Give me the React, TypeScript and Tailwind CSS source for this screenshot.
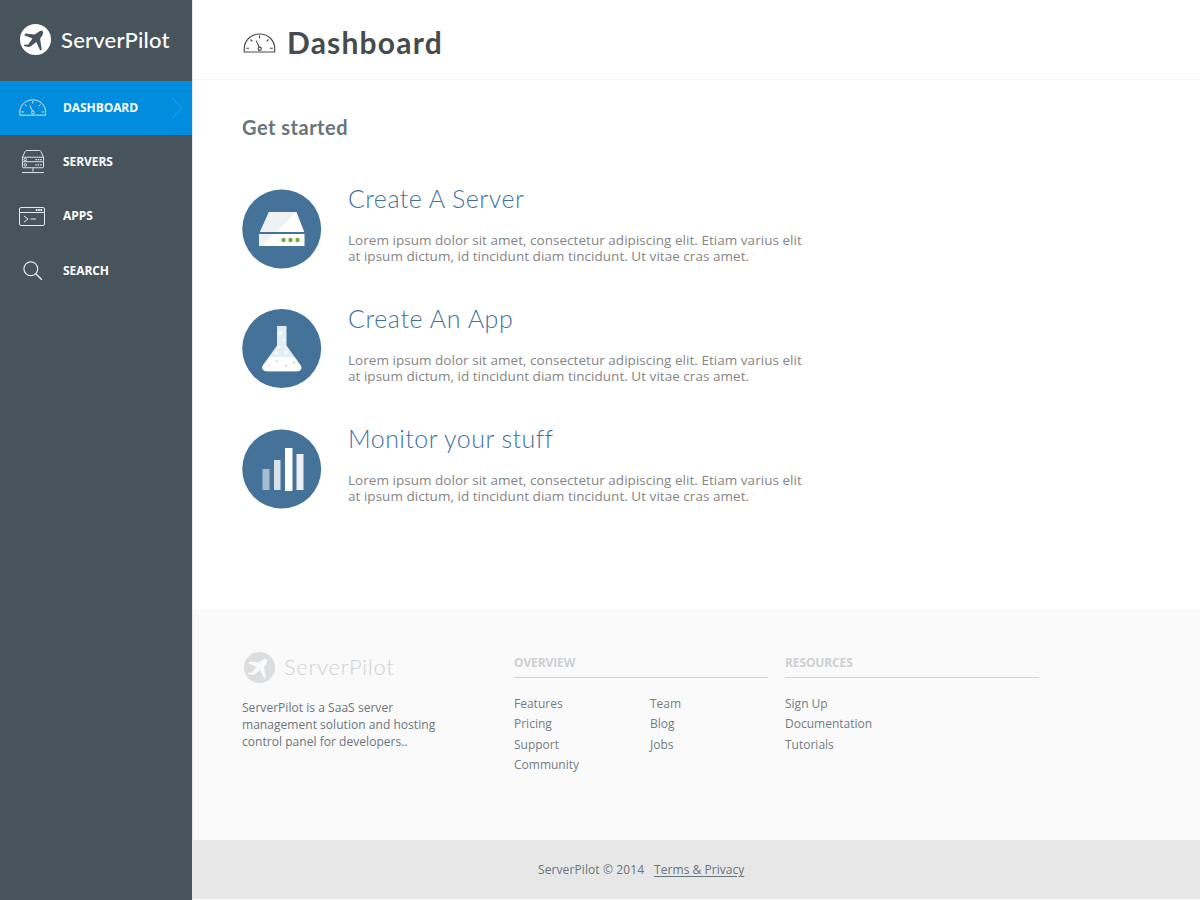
import type { ReactNode } from "react";

function PlaneLogo({ disc, plane }: { disc: string; plane: string }) {
  return (
    <svg viewBox="0 0 31 31" className="size-[31px] shrink-0">
      <circle cx="15.500" cy="15.500" r="15.500" fill={disc} />
      <path
        fill={plane}
        d="M22.700 7.300C21.900 6.500 20 6.900 18.500 7.900L14.500 10.400 5.200 9.500 4.300 11.200 12.500 14.600 8.200 20.600 4.300 20.800 3.900 21.900 8.300 23 10.900 22.200 16.200 18 20.300 26.700 21.700 25.600 20.100 14.800 22.200 11.500C23.100 10 23.500 8.100 22.700 7.300z"
      />
    </svg>
  );
}

function GaugeIcon({ className }: { className: string }) {
  return (
    <svg viewBox="0 0 34 21" fill="none" stroke="currentColor" strokeWidth="1.200" className={className}>
      <path d="M1 20v-3.500C1 7.800 8 1 17 1s16 6.800 16 15.500V20z" />
      <path d="M17 2.500v3M7.500 6.800l2 2M26.500 6.800l-2 2M3 16h3M28 16h3M13.500 8l3 6.800" />
      <circle cx="17.200" cy="16.500" r="1.700" />
    </svg>
  );
}

function ServersIcon() {
  return (
    <svg viewBox="0 0 24 25" fill="none" stroke="currentColor" strokeWidth="1" className="h-6 w-6">
      <path d="M1 7.500 3.800 1.500Q4.200.5 5.300.5h13.400q1.100 0 1.500 1L23 7.500M1 7.500h22v4.700h-22zM1 12.500v5q0 1 1 1h20q1 0 1-1v-5M12 18.500v4M.5 23.500h23" />
      <circle cx="4" cy="10" r="1.300" />
      <circle cx="4" cy="15.500" r="1.300" />
      <path strokeWidth="1.300" strokeDasharray="1.500 1" d="M14.500 10h7M14.500 15.500h7" />
    </svg>
  );
}

function AppsIcon() {
  return (
    <svg viewBox="0 0 26 19" fill="none" stroke="currentColor" className="mr-px h-[19px] w-[26px]">
      <rect x=".5" y=".5" width="25" height="18" rx="1.500" />
      <path d="M1 5.500h24" />
      <path strokeWidth="1.800" strokeDasharray="1.700 .6" d="M16.800 3h6.500" />
      <path d="M5 9l4 3-4 3.200M11.500 12h5.500" />
    </svg>
  );
}

function SearchIcon() {
  return (
    <svg viewBox="0 0 20 20" fill="none" stroke="currentColor" strokeWidth="1.200" className="size-5">
      <circle cx="7.800" cy="7.700" r="6.900" />
      <path strokeWidth="1.600" d="M12.800 12.700l6 6" />
    </svg>
  );
}

function NavItem({ icon, label, active = false }: { icon: ReactNode; label: string; active?: boolean }) {
  return (
    <a
      className={`flex items-center pl-[18px] text-[12px] font-bold text-white ${active ? "h-[54px] bg-[#008ddf]" : "h-[54.300px]"}`}
    >
      <span className="flex w-[29px] justify-center text-[#dfe9ee]">{icon}</span>
      <span className="ml-4 tracking-[-0.070px]">{label}</span>
      {active && (
        <svg viewBox="0 0 12 22" fill="none" stroke="#2a9fe5" className="mr-[9px] ml-auto h-[22px] w-3">
          <path d="M1 1l10 10L1 21" />
        </svg>
      )}
    </a>
  );
}

function ServerArt() {
  return (
    <svg viewBox="0 0 80 80" className="size-20">
      <circle cx="39.700" cy="40" r="39.500" fill="#457299" />
      <path fill="#fff" d="M27 23h27.500l7.800 20H18zM17 45h45.500v12H17z" />
      <path fill="#f0f1f3" d="M27 23h27L34.500 43H18zM17 45h14.500L20 57h-3z" />
      <g fill="#76ad32">
        <circle cx="41.500" cy="51" r="2.200" />
        <circle cx="48.500" cy="51" r="2.200" />
        <circle cx="55.500" cy="51" r="2.200" />
      </g>
    </svg>
  );
}

function FlaskArt() {
  return (
    <svg viewBox="0 0 80 80" className="size-20">
      <circle cx="39.700" cy="39.500" r="39.500" fill="#457299" />
      <path fill="#e2eef3" d="M35 17h9.500v19.500L58 55.500c2.800 3.500 1 6.700-3 6.700H25c-4.500 0-6-3.700-3.300-7L35 36.500z" />
      <path fill="#fff" d="M27.500 48h25L58 55.500c2.800 3.500 1 6.700-3 6.700H25c-4.500 0-6-3.700-3.300-7z" />
      <g fill="#fff">
        <circle cx="38" cy="24" r="1.800" />
        <circle cx="42" cy="31" r="1.300" />
        <circle cx="37" cy="38" r="1.300" />
        <circle cx="44" cy="43" r="1.800" />
        <circle cx="34" cy="44" r="1.300" />
      </g>
      <g fill="#e0e7ec">
        <circle cx="35" cy="52" r="1.500" />
        <circle cx="27" cy="56.500" r="1.200" />
        <circle cx="44" cy="56.500" r="1.500" />
        <circle cx="52" cy="53.500" r="1.700" />
      </g>
    </svg>
  );
}

function BarsArt() {
  return (
    <svg viewBox="0 0 80 80" className="size-20">
      <circle cx="39.700" cy="40" r="39.500" fill="#457299" />
      <path fill="#a6bdd0" d="M20.500 40h7v21h-7z" />
      <path fill="#d6e0e8" d="M32 31h6.500v30H32z" />
      <path fill="#fff" d="M43 19h7.500v43H43z" />
      <path fill="#eef2f5" d="M54.500 25h7v36h-7z" />
    </svg>
  );
}

function Step({ art, title, spacing }: { art: ReactNode; title: string; spacing: string }) {
  return (
    <section className="flex h-[120px]">
      {art}
      <div className="-mt-[7px] ml-[26px]">
        <h3 className={`font-[Lato] text-[25px] leading-8 font-light whitespace-nowrap text-[#3f739f] ${spacing}`}>{title}</h3>
        <p className="mt-[18px] text-[13.500px] leading-[16.400px] tracking-[0.033px] whitespace-nowrap text-[#858585]">
          Lorem ipsum dolor sit amet, consectetur adipiscing elit. Etiam varius elit
          <br />
          at ipsum dictum, id tincidunt diam tincidunt. Ut vitae cras amet.
        </p>
      </div>
    </section>
  );
}

function LinkList({ items }: { items: string[] }) {
  return (
    <ul className="w-[136px] shrink-0 text-[12px] leading-[20.300px] text-[#717d84]">
      {items.map((item) => (
        <li key={item}>{item}</li>
      ))}
    </ul>
  );
}

function FooterSection({ title, lists }: { title: string; lists: string[][] }) {
  return (
    <div className="w-[254px]">
      <h4 className="h-[26px] border-b border-[#d2d4d5] pt-[2px] text-[12px] leading-[18px] font-bold tracking-[-0.120px] text-[#cdd0d2]">
        {title}
      </h4>
      <div className="mt-[16px] flex">
        {lists.map((items) => (
          <LinkList key={items[0]} items={items} />
        ))}
      </div>
    </div>
  );
}

export default function App() {
  return (
    <div className="flex h-[900px] w-[1200px] overflow-hidden bg-white font-['Open_Sans',sans-serif]">
      <aside className="w-[192px] shrink-0 bg-[#48545c]">
        <div className="flex h-[81px] items-center pb-[2px] pl-5">
          <PlaneLogo disc="#fff" plane="#48545c" />
          <span className="ml-[10px] font-[Lato] text-[22px] font-medium tracking-[0.220px] text-white">ServerPilot</span>
        </div>
        <nav>
          <NavItem active label="DASHBOARD" icon={<GaugeIcon className="mb-[2px] h-[17px] w-[27.500px]" />} />
          <NavItem label="SERVERS" icon={<ServersIcon />} />
          <NavItem label="APPS" icon={<AppsIcon />} />
          <NavItem label="SEARCH" icon={<SearchIcon />} />
        </nav>
      </aside>

      <div className="flex min-w-0 flex-1 flex-col border-l border-[#e5e7e8]">
        <header className="flex h-[80px] items-center border-b border-[#f5f5f5] pl-[50px] text-[#454b4e]">
          <GaugeIcon className="mt-[7px] h-[20px] w-[33px]" />
          <h1 className="mt-[4px] ml-[11px] font-[Lato] text-[30px] leading-10 font-bold tracking-[1.200px]">Dashboard</h1>
        </header>

        <main className="h-[529px] pt-[33px] pl-[49px]">
          <h2 className="font-[Lato] text-[20px] leading-7 font-bold tracking-[0.500px] text-[#68747a]">Get started</h2>
          <div className="mt-[48px]">
            <Step art={<ServerArt />} title="Create A Server" spacing="tracking-[0.480px]" />
            <Step art={<FlaskArt />} title="Create An App" spacing="tracking-[0.620px]" />
            <Step art={<BarsArt />} title="Monitor your stuff" spacing="tracking-[0.450px]" />
          </div>
        </main>

        <footer className="flex flex-1 flex-col bg-[#fafafa]">
          <div className="flex h-[231px] pt-[43px] pl-[49px]">
            <div className="w-[272px] shrink-0">
              <div className="flex h-[31px] items-center pl-[2px]">
                <PlaneLogo disc="#dcdddf" plane="#fafafa" />
                <span className="mb-[2px] ml-[9px] font-[Lato] text-[22px] font-light tracking-[0.700px] text-[#cfd2d5]">
                  ServerPilot
                </span>
              </div>
              <p className="mt-[16px] text-[12px] leading-[17px] tracking-[0.040px] whitespace-nowrap text-[#68757c]">
                ServerPilot is a SaaS server
                <br />
                management solution and hosting
                <br />
                control panel for developers..
              </p>
            </div>
            <div className="flex gap-[17px]">
              <FooterSection
                title="OVERVIEW"
                lists={[
                  ["Features", "Pricing", "Support", "Community"],
                  ["Team", "Blog", "Jobs"],
                ]}
              />
              <FooterSection title="RESOURCES" lists={[["Sign Up", "Documentation", "Tutorials"]]} />
            </div>
          </div>
          <div className="flex h-[59px] items-center bg-[#e7e7e7] pt-px pl-[345px] text-[12px] text-[#68757c]">
            <span className="tracking-[0.100px]">ServerPilot © 2014</span>
            <a className="ml-[10px] tracking-[0.040px] underline decoration-1 underline-offset-2">Terms &amp; Privacy</a>
          </div>
        </footer>
      </div>
    </div>
  );
}
